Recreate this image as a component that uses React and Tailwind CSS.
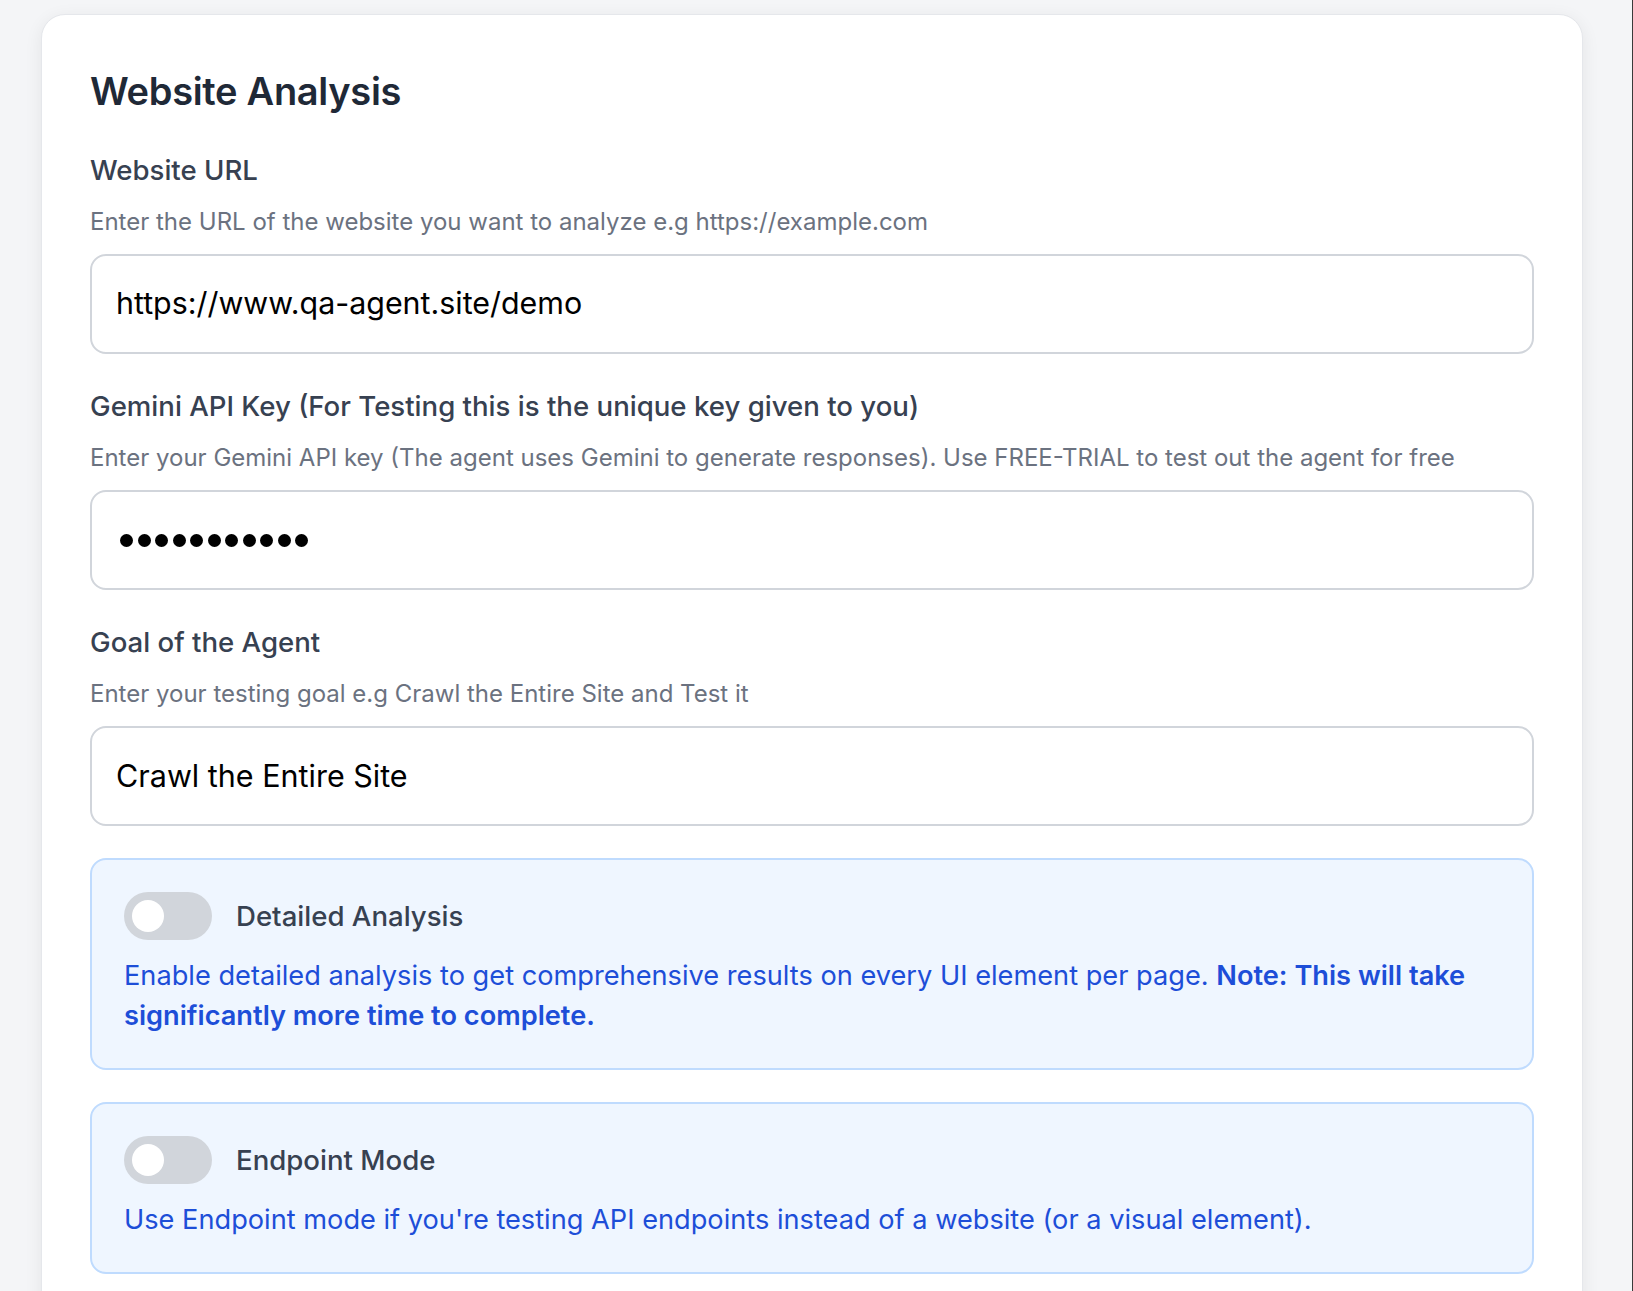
import React from "react";

function Field({ label, desc, children }) {
  return (
    <div className="flex flex-col mb-[32px]">
      <label className="text-[27.6px] leading-[40px] font-medium text-[#374151]">{label}</label>
      <p className="mt-[16px] text-[24px] leading-[32px] text-[#6b7280]">{desc}</p>
      <div className="mt-[16px] h-[100px] rounded-2xl border-2 border-[#d1d5db] bg-white px-[24px] flex items-center">
        {children}
      </div>
    </div>
  );
}

function Toggle() {
  return (
    <div className="w-[88px] h-[48px] rounded-full bg-[#d1d5db] flex items-center px-[8px] shrink-0">
      <div className="w-[32px] h-[32px] rounded-full bg-white" />
    </div>
  );
}

export default function App() {
  return (
    <div
      className="min-h-screen w-full bg-[#f4f5f7] border-r border-[#3a3a3a] pt-[14px] pb-[40px]"
      style={{ fontFamily: "Inter, 'Noto Sans', sans-serif" }}
    >
      <div className="ml-[41px] w-[1542px] rounded-3xl border border-[#e5e7eb] bg-white p-[48px] shadow-[0_4px_18px_rgba(0,0,0,0.07)]">
        <h2 className="text-[38px] leading-[56px] font-semibold text-[#1f2937] mb-[31px] tracking-[-0.3px]">
          Website Analysis
        </h2>

        <Field
          label="Website URL"
          desc="Enter the URL of the website you want to analyze e.g https://example.com"
        >
          <span className="text-[30.4px] text-black">https://www.qa-agent.site/demo</span>
        </Field>

        <Field
          label="Gemini API Key (For Testing this is the unique key given to you)"
          desc="Enter your Gemini API key (The agent uses Gemini to generate responses). Use FREE-TRIAL to test out the agent for free"
        >
          <div className="flex items-center gap-[4.5px] pl-[4px]">
            {Array.from({ length: 11 }).map((_, i) => (
              <div key={i} className="w-[13px] h-[13px] rounded-full bg-black" />
            ))}
          </div>
        </Field>

        <Field
          label="Goal of the Agent"
          desc="Enter your testing goal e.g Crawl the Entire Site and Test it"
        >
          <span className="text-[30.5px] text-black">Crawl the Entire Site</span>
        </Field>

        <div className="rounded-2xl border-2 border-[#bfdbfe] bg-[#eff6ff] p-[32px] mb-[32px]">
          <div className="flex items-center">
            <Toggle />
            <span className="ml-[24px] text-[27.6px] leading-[40px] font-medium text-[#374151]">
              Detailed Analysis
            </span>
          </div>
          <p className="mt-[16px] text-[27.2px] leading-[40px] text-[#1d4ed8]">
            Enable detailed analysis to get comprehensive results on every UI element per page.{" "}
            <span className="font-semibold">Note: This will take significantly more time to complete.</span>
          </p>
        </div>

        <div className="rounded-2xl border-2 border-[#bfdbfe] bg-[#eff6ff] p-[32px]">
          <div className="flex items-center">
            <Toggle />
            <span className="ml-[24px] text-[27.6px] leading-[40px] font-medium text-[#374151]">
              Endpoint Mode
            </span>
          </div>
          <p className="mt-[16px] text-[27.2px] leading-[40px] text-[#1d4ed8]">
            Use Endpoint mode if you're testing API endpoints instead of a website (or a visual element).
          </p>
        </div>
      </div>
    </div>
  );
}
